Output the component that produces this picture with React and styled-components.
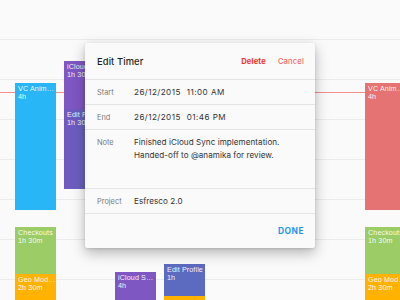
import React from "react";
import styled, { createGlobalStyle } from "styled-components";

const Global = createGlobalStyle`
  html, body { margin: 0; padding: 0; }
  body { width: 400px; height: 300px; overflow: hidden; background: #fafafa;
    font-family: "Inter", "Liberation Sans", sans-serif; -webkit-font-smoothing: antialiased; }
`;

const Canvas = styled.div`
  position: relative;
  width: 400px;
  height: 300px;
  overflow: hidden;
  background: #fafafa;
`;

const Grid = styled.div`
  display: flex;
  flex-direction: column;
`;

const GridRow = styled.div`
  height: 40px;
  border-bottom: 1px solid #ececec;
  box-sizing: border-box;
`;

const NowLine = styled.div`
  position: absolute;
  left: 0;
  right: 0;
  top: 92px;
  height: 1px;
  background: #ef8f8f;
`;

const Event = styled.div`
  position: absolute;
  box-sizing: border-box;
  width: 41px;
  padding: 2px 0 0 3px;
  background: ${(p) => p.$bg};
  color: rgba(255, 255, 255, 0.94);
  font-family: "Liberation Sans", "Inter", sans-serif;
  font-size: 7.2px;
  line-height: 8px;
  letter-spacing: 0.1px;
  overflow: hidden;
  white-space: nowrap;
`;

const EventLine = styled.div`
  overflow: hidden;
  text-overflow: ellipsis;
`;

const Dialog = styled.div`
  position: absolute;
  left: 85px;
  top: 43px;
  width: 230px;
  background: #fafafa;
  border-radius: 2px;
  box-shadow: 0 5px 14px rgba(0, 0, 0, 0.28), 0 1px 3px rgba(0, 0, 0, 0.12);
  display: flex;
  flex-direction: column;
`;

const Header = styled.div`
  height: 37px;
  display: flex;
  align-items: center;
  padding: 0 11px 0 12px;
  border-bottom: 1px solid #e4e4e4;
  box-sizing: border-box;
`;

const Title = styled.div`
  flex: 1;
  font-size: 9.4px;
  font-weight: 500;
  color: #1f1f1f;
  letter-spacing: 0.1px;
`;

const Action = styled.span`
  font-size: 7.6px;
  font-weight: ${(p) => (p.$strong ? 700 : 500)};
  color: ${(p) => (p.$strong ? "#f0302c" : "#f06a66")};
  margin-left: ${(p) => p.$ml || 0}px;
  letter-spacing: 0.15px;
`;

const Row = styled.div`
  display: flex;
  align-items: ${(p) => (p.$top ? "flex-start" : "center")};
  height: ${(p) => p.$h}px;
  padding: ${(p) => (p.$top ? "6px" : "0")} 12px 0 12px;
  border-bottom: 1px solid #e4e4e4;
  box-sizing: border-box;
`;

const Label = styled.div`
  width: 37px;
  flex: none;
  font-size: 7.4px;
  color: #7a7a7a;
  line-height: 13px;
`;

const Value = styled.div`
  display: flex;
  gap: 6px;
  font-size: 8.1px;
  color: #333;
  line-height: 13px;
  letter-spacing: 0.05px;
  white-space: pre;
`;

const DateText = styled.span`
  letter-spacing: 0.45px;
`;

const Footer = styled.div`
  height: 34px;
  display: flex;
  align-items: center;
  justify-content: flex-end;
  padding: 0 11px;
`;

const Done = styled.span`
  font-size: 8.4px;
  font-weight: 700;
  color: #2196f3;
  letter-spacing: 0.5px;
`;

const events = [
  { l: 15, t: 83, h: 127, bg: "#29b6f6", a: "VC Animation", b: "4h" },
  { l: 64, t: 61, h: 48, bg: "#7e57c2", a: "iCloud Sync", b: "1h 30m" },
  { l: 64, t: 109, h: 80, bg: "linear-gradient(90deg, #7357c0, #5c6bc0)", a: "Edit Profile", b: "1h 30m" },
  { l: 15, t: 227, h: 47, bg: "#9ccc65", a: "Checkouts", b: "1h 30m" },
  { l: 15, t: 274, h: 80, bg: "#ffb300", a: "Geo Module", b: "2h 30m" },
  { l: 115, t: 272, h: 128, bg: "#7e57c2", a: "iCloud Sync", b: "4h" },
  { l: 164, t: 264, h: 32, bg: "#5c6bc0", a: "Edit Profile", b: "1h" },
  { l: 164, t: 296, h: 40, bg: "#ffb300", a: "", b: "" },
  { l: 365, t: 83, h: 127, bg: "#e57373", a: "VC Animation", b: "4h" },
  { l: 365, t: 227, h: 47, bg: "#9ccc65", a: "Checkouts", b: "1h 30m" },
  { l: 365, t: 274, h: 80, bg: "#ffb300", a: "Geo Module", b: "2h 30m" },
];

export default function App() {
  return (
    <>
      <Global />
      <Canvas>
        <Grid>
          {Array.from({ length: 7 }).map((_, i) => (
            <GridRow key={i} />
          ))}
        </Grid>
        <NowLine />
        {events.map((e, i) => (
          <Event key={i} $bg={e.bg} style={{ left: e.l, top: e.t, height: e.h }}>
            <EventLine>{e.a}</EventLine>
            <EventLine>{e.b}</EventLine>
          </Event>
        ))}
        <Dialog>
          <Header>
            <Title>Edit Timer</Title>
            <Action $strong>Delete</Action>
            <Action $ml={12}>Cancel</Action>
          </Header>
          <Row $h={25}>
            <Label>Start</Label>
            <Value>
              <DateText>26/12/2015</DateText>
              <DateText>11:00 AM</DateText>
            </Value>
          </Row>
          <Row $h={25}>
            <Label>End</Label>
            <Value>
              <DateText>26/12/2015</DateText>
              <DateText>01:46 PM</DateText>
            </Value>
          </Row>
          <Row $h={59} $top>
            <Label>Note</Label>
            <Value>{"Finished iCloud Sync implementation.\nHanded-off to @anamika for review."}</Value>
          </Row>
          <Row $h={25}>
            <Label>Project</Label>
            <Value>Esfresco 2.0</Value>
          </Row>
          <Footer>
            <Done>DONE</Done>
          </Footer>
        </Dialog>
      </Canvas>
    </>
  );
}
